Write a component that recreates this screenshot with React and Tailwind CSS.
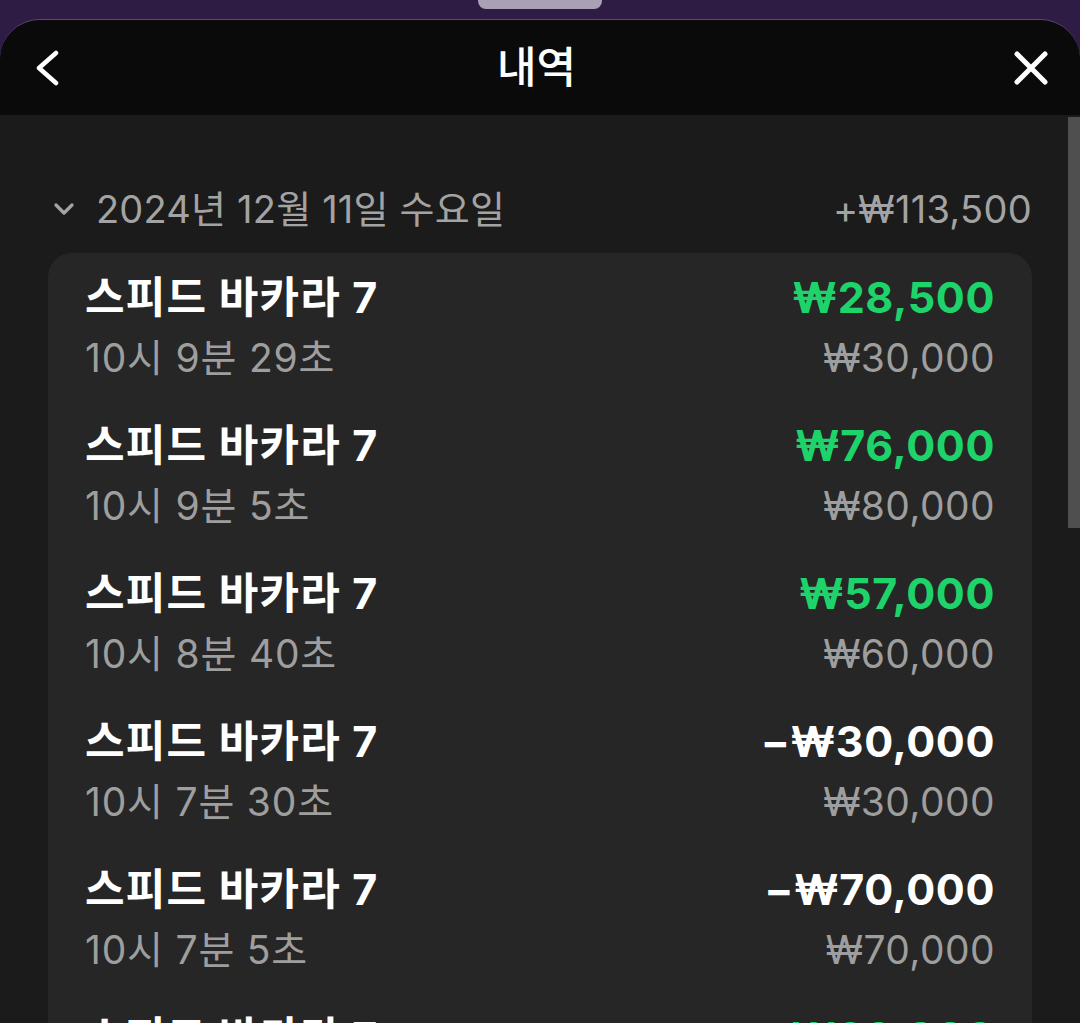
import React from "react";
import { ChevronDown } from "lucide-react";

const rows = [
    { time: "10시 9분 29초", win: "₩28,500", bet: "₩30,000", up: true },
    { time: "10시 9분 5초", win: "₩76,000", bet: "₩80,000", up: true },
    { time: "10시 8분 40초", win: "₩57,000", bet: "₩60,000", up: true },
    { time: "10시 7분 30초", win: "−₩30,000", bet: "₩30,000", up: false },
    { time: "10시 7분 5초", win: "−₩70,000", bet: "₩70,000", up: false },
    { time: "10시 6분 40초", win: "₩38,000", bet: "₩40,000", up: true },
];

const font = { fontFamily: "Inter, 'Noto Sans CJK KR', sans-serif" };

function App() {
    return (
        <div className="w-[1080px] h-[1023px] overflow-hidden bg-[#2e1c45] flex flex-col" style={font}>
            {/* drag handle */}
            <div className="h-[19px] flex justify-center shrink-0">
                <div className="w-[124px] h-[9px] bg-[#aaa0b6] rounded-b-lg"></div>
            </div>

            <div className="flex-1 flex flex-col rounded-t-[40px] overflow-hidden border-t border-[#5b4a72] relative">
                {/* Header */}
                <div className="h-[95px] bg-[#0a0a0a] flex items-center justify-between pl-[34px] pr-[31px] shrink-0">
                    <svg width="26" height="36" viewBox="0 0 26 36" fill="none" stroke="white" strokeWidth="4.5" strokeLinecap="round" strokeLinejoin="round">
                        <polyline points="22,3 5,18 22,33" />
                    </svg>
                    <h1 className="text-[43px] font-medium text-white">내역</h1>
                    <svg width="36" height="36" viewBox="0 0 36 36" fill="none" stroke="white" strokeWidth="5" strokeLinecap="round">
                        <path d="M4 4 L32 32 M32 4 L4 32" />
                    </svg>
                </div>

                {/* Body */}
                <div className="flex-1 bg-[#1b1b1b] px-[48px] relative">
                    <div className="absolute right-0 top-[2px] w-[12px] h-[411px] bg-[#4f4f4f]"></div>

                    <div className="h-[138px] flex items-end pb-[25px] justify-between">
                        <div className="flex items-center gap-[16px] text-[#a3a3a3]">
                            <ChevronDown className="w-[32px] h-[32px]" strokeWidth={2.5} />
                            <span className="text-[38px] leading-none tracking-[0.2px]">2024년 12월 11일 수요일</span>
                        </div>
                        <span className="text-[38px] leading-none tracking-[0.3px] text-[#a3a3a3]">+₩113,500</span>
                    </div>

                    <div className="bg-[#262626] rounded-[24px] px-[37px]">
                        {rows.map((r, i) => (
                            <div key={i} className="h-[148px] pt-[14px] flex justify-between">
                                <div className="flex flex-col">
                                    <span className="text-[43px] leading-[60px] font-bold tracking-[1.2px] text-white">스피드 바카라 7</span>
                                    <span className="text-[39px] leading-[62px] tracking-[0.8px] text-[#9e9e9e]">{r.time}</span>
                                </div>
                                <div className="flex flex-col items-end">
                                    <span className={`text-[43px] leading-[60px] font-bold tracking-[0.6px] ${r.up ? "text-[#1fd36b]" : "text-white"}`}>
                                        {r.win}
                                    </span>
                                    <span className="text-[39px] leading-[62px] tracking-[0.4px] text-[#9e9e9e]">{r.bet}</span>
                                </div>
                            </div>
                        ))}
                    </div>
                </div>
            </div>
        </div>
    );
}

export default App;
